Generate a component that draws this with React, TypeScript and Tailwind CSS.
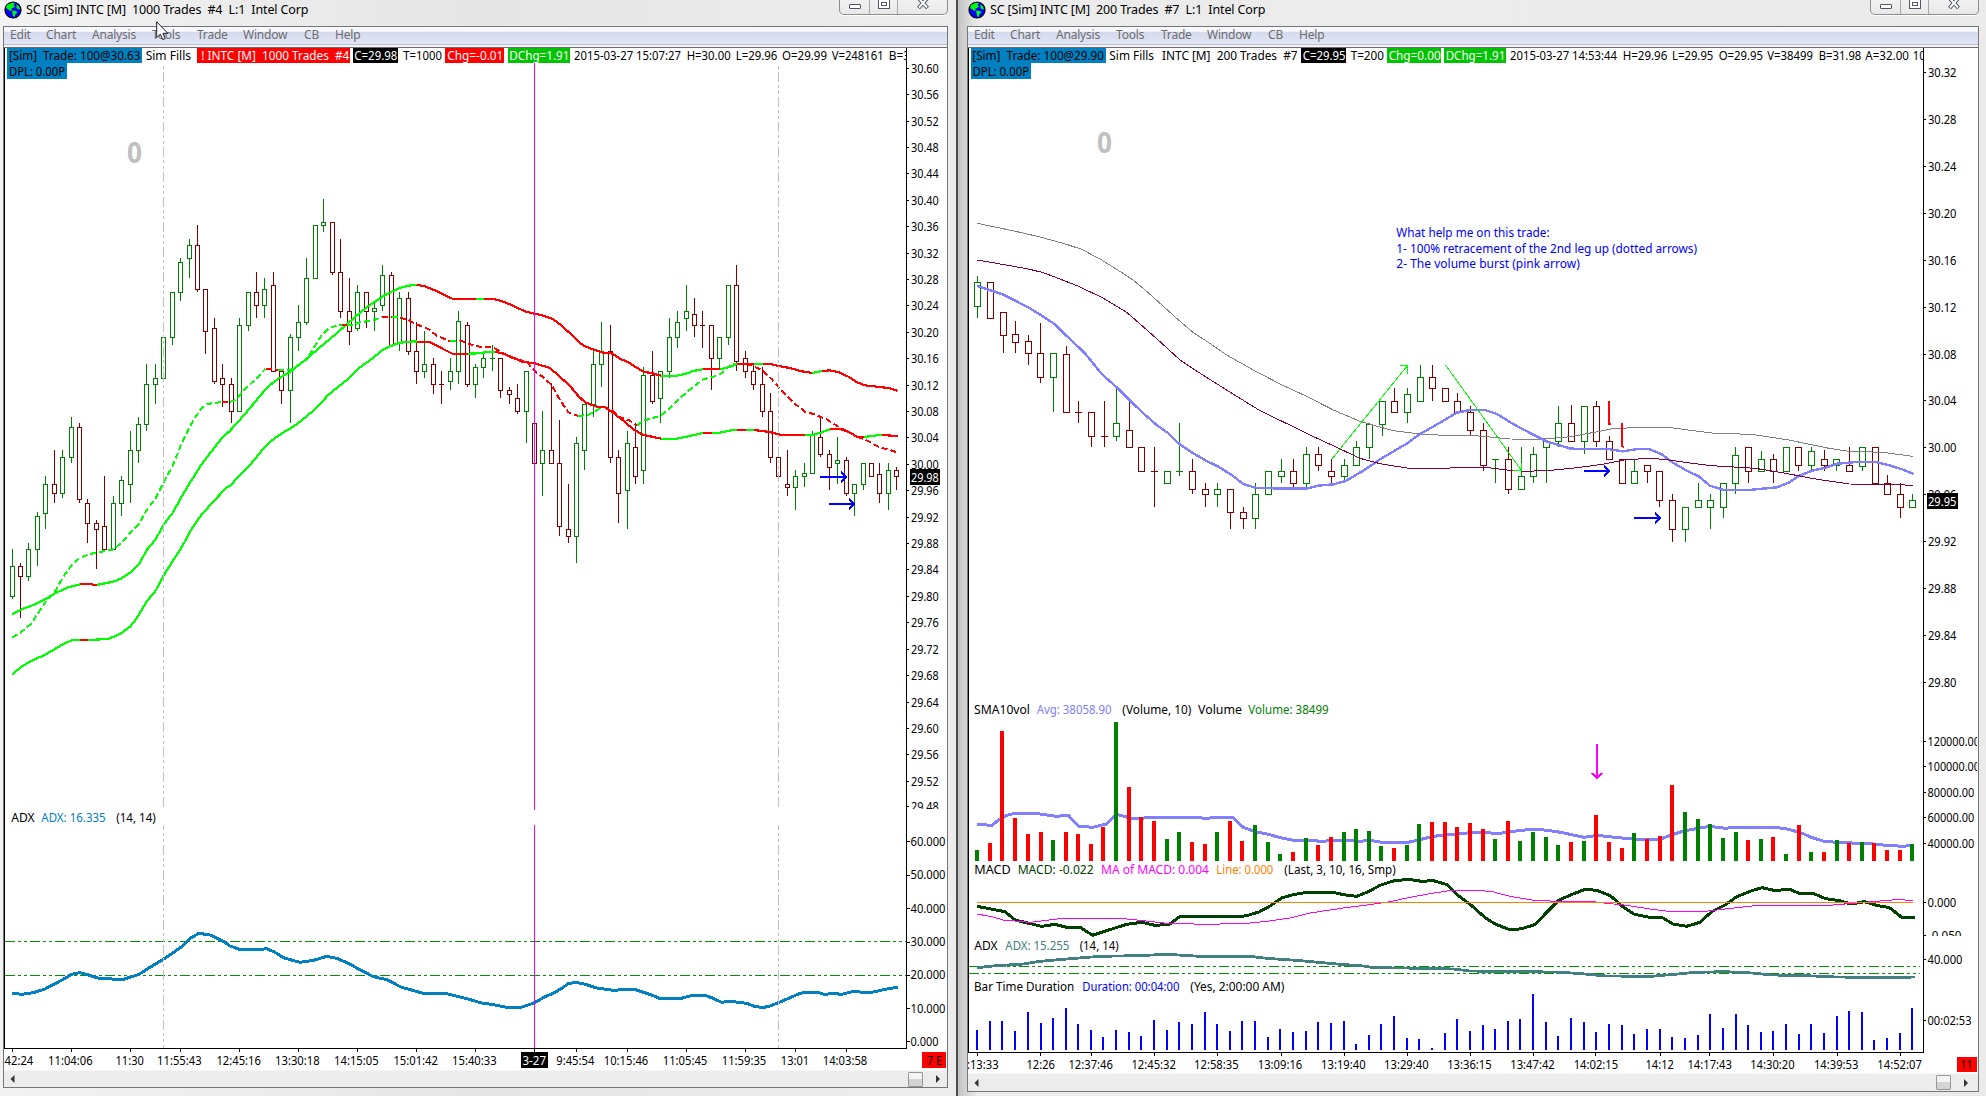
import React from 'react';

const FONT = 'font-["Noto_Sans","Open_Sans",sans-serif]';

/* ---------- chart data: coordinates are thirds of a pixel ---------- */

// x, high, body top, body bottom, low, colour
const LEFT_CANDLES = `
37 1107 1159 1249 1257 g;61 1149 1159 1189 1316 r;86 1089 1108 1189 1205 g;112 998 1009 1108 1158 g;136 888 913 1000 1047 g;
163 810 913 940 969 r;187 810 832 940 954 g;214 711 742 832 849 g;238 729 742 958 969 r;263 957 970 1030 1089 r;
289 1020 1030 1048 1167 r;313 888 1039 1108 1110 r;340 948 970 1108 1110 g;364 888 901 970 1008 g;391 753 811 913 969 g;
415 711 732 811 849 g;439 552 613 733 753 g;466 552 595 613 672 g;490 472 472 595 597 g;517 337 337 472 495 g;
541 234 247 337 363 g;567 177 196 235 294 g;592 135 196 328 336 r;617 328 328 454 522 r;643 414 445 604 612 r;
667 552 595 613 681 r;694 594 613 694 729 r;718 414 436 694 696 g;744 337 337 436 453 g;769 276 337 376 414 r;
793 294 328 376 414 g;820 276 316 574 576 r;844 573 573 631 672 r;871 462 472 631 729 g;895 375 427 472 513 g;
920 234 295 427 435 g;946 136 136 295 297 g;970 57 127 136 156 g;997 127 127 277 285 r;1021 177 277 394 414 r;
1047 294 394 454 495 r;1072 315 337 445 453 g;1098 337 337 394 444 r;1123 366 385 394 453 g;1147 255 286 376 393 g;
1174 276 286 496 498 r;1198 336 355 487 513 g;1224 336 355 514 525 r;1249 426 514 574 612 r;1273 453 553 574 594 g;
1300 534 553 613 642 r;1324 573 613 613 672 r;1351 534 574 604 630 g;1375 393 424 574 612 g;1402 426 436 613 621 r;
1426 552 562 613 654 g;1451 513 535 562 594 g;1477 495 535 535 573 g;1501 535 535 631 654 r;1528 621 631 643 672 r;
1552 612 655 694 702 r;1578 573 573 694 789 g;1603 730 730 850 852 r;1627 693 811 850 948 g;1654 612 811 850 852 r;
1678 720 850 1039 1068 r;1704 912 1048 1070 1089 r;1729 771 790 1070 1149 g;1754 673 673 811 870 g;1780 513 553 673 711 g;
1804 426 514 553 621 g;1831 435 514 832 849 r;1855 810 832 940 1029 r;1882 753 790 931 1047 g;1906 729 802 889 912 r;
1931 561 586 871 912 g;1957 513 586 664 672 r;1981 573 574 655 729 g;2008 414 472 574 594 g;2032 393 427 472 504 g;
2059 315 394 415 453 g;2083 354 403 436 471 r;2108 393 436 436 504 r;2134 436 436 535 630 r;2158 472 472 535 571 g;
2186 316 316 472 495 g;2209 255 316 544 573 r;2235 513 535 574 594 r;2260 555 574 613 630 r;2286 561 613 694 711 r;
2311 639 694 832 849 r;2335 832 832 889 891 r;2362 810 913 922 948 r;2386 870 889 922 990 g;2412 849 880 889 921 g;
2437 753 766 880 882 g;2461 711 772 823 831 r;2488 810 823 862 930 r;2512 771 841 850 912 g;2539 831 841 940 948 r;
2563 913 913 940 1008 g;2589 850 850 913 930 g;2614 850 850 889 891 r;2638 849 883 940 969 r;2665 849 871 940 990 g;
2689 861 871 889 930 r`;

const RIGHT_CANDLES = `
52 228 247 319 354 g;91 247 247 355 357 r;129 337 337 406 459 r;166 363 403 427 459 r;205 405 424 460 495 r;
242 369 460 532 549 r;280 460 460 532 636 g;319 438 463 637 639 r;356 603 637 637 669 r;394 637 637 709 741 r;
432 603 709 709 741 r;469 567 670 709 723 g;508 603 691 742 744 r;545 742 742 814 816 r;583 741 814 814 921 r;
622 814 814 850 852 g;658 669 814 814 828 g;697 777 814 868 882 r;736 849 868 883 921 r;772 849 868 883 921 g;
811 868 868 937 987 r;849 921 937 955 987 r;886 849 883 955 987 g;925 814 814 883 885 g;963 777 814 829 849 g;
1000 777 814 850 864 r;1039 741 763 850 867 g;1075 741 763 796 813 r;1114 777 814 829 849 r;1153 777 796 829 844 g;
1189 723 742 796 798 g;1228 669 673 742 777 g;1267 603 604 673 708 g;1303 564 604 637 639 r;1342 564 583 637 669 g;
1380 495 532 604 606 g;1417 495 532 565 603 r;1456 565 565 604 606 r;1493 579 604 637 639 r;1531 618 637 691 705 r;
1569 669 691 796 813 r;1607 778 778 778 849 g;1644 741 778 868 882 r;1682 741 829 868 870 g;1719 741 763 829 849 g;
1757 720 724 742 849 g;1795 618 670 724 741 g;1833 615 670 724 726 r;1871 619 619 724 762 g;1907 603 619 724 741 r;
1945 708 724 778 780 r;1984 778 778 850 852 r;2021 777 814 850 852 g;2058 796 796 814 849 r;2096 814 814 901 921 r;
2133 882 901 988 1026 r;2172 922 922 988 1026 g;2210 849 901 922 924 g;2246 882 901 922 987 g;2285 850 850 922 954 g;
2322 741 766 850 882 g;2360 742 742 814 849 r;2398 753 778 814 816 g;2435 762 778 814 849 r;2473 742 742 814 816 g;
2510 742 742 796 813 r;2547 742 754 796 813 g;2586 750 778 796 813 r;2623 778 778 796 813 g;2661 741 796 814 816 r;
2699 741 742 799 813 g;2737 742 742 850 852 r;2774 825 850 883 885 r;2813 849 883 922 954 r;2849 882 901 922 924 g`;

// x, volume top, colour, duration top
const BARS = `
51 480 g 1020;90 459 r 993;127 123 r 993;165 384 r 1023;204 432 r 966;242 426 r 999;279 450 g 984;318 426 r 954;354 432 r 1002;
393 462 r 1020;430 411 r 1041;468 96 g 1020;507 291 r 1026;544 381 r 1038;582 393 r 990;621 447 g 1020;658 426 g 996;
696 456 r 1002;735 462 r 966;771 426 g 1002;810 393 r 1023;847 453 r 993;885 405 g 993;924 456 g 1041;961 492 g 1017;
999 486 r 1026;1038 444 g 1023;1075 465 r 996;1113 441 r 999;1152 426 g 993;1188 417 g 1062;1227 423 g 1035;1264 468 g 1002;
1302 474 r 978;1341 465 g 1044;1378 402 g 1047;1416 396 r 1074;1455 396 r 1029;1492 411 r 987;1530 399 r 1023;1569 417 r 1005;
1604 447 g 1017;1643 393 r 993;1680 453 g 987;1718 426 g 912;1756 441 g 996;1793 465 g 1038;1831 456 r 984;1870 453 g 996;
1906 375 r 1026;1944 456 r 1002;1983 474 r 1005;2019 429 g 1032;2057 447 r 1017;2096 438 r 1017;2132 285 r 1041;
2171 366 g 1044;2208 387 g 1035;2245 402 g 972;2284 444 g 1014;2321 426 g 972;2358 450 r 1005;2397 447 g 1026;
2433 441 r 1023;2472 492 g 1002;2511 405 r 1032;2546 486 g 1002;2585 486 r 1029;2622 450 g 978;2660 459 r 963;
2698 456 g 966;2735 459 r 1050;2773 480 r 1044;2812 480 r 1029;2847 462 g 954`;

const UPPER =
  'g 37,1303 65,1288 100,1275 135,1258 165,1240 205,1222 240,1213 r 265,1212 290,1215 g 340,1205 365,1195 390,1178 418,1152 440,1110 467,1078 490,1035 517,1000 545,950 575,900 600,860 630,820 665,775 690,752 715,725 745,690 770,660 795,630 820,607 845,590 870,577 895,555 920,538 950,510 980,485 1010,460 1040,433 1070,407 1100,382 1125,365 1150,348 1175,335 1200,324 1225,317 1250,314 r 1275,319 1300,329 1330,343 1357,356 1427,356 g 1452,356 r 1480,357 1502,362 1530,373 1555,385 1580,396 1604,401 1630,407 1660,418 1685,437 1710,460 1735,485 1755,499 1790,512 1810,518 1835,520 1860,536 1885,547 1910,563 1930,575 1957,580 1984,587 g 2030,587 2055,582 2080,573 2108,568 r 2160,568 g 2185,562 2212,552 r 2262,551 g 2290,551 r 2310,551 2335,558 2370,564 2400,573 2437,579 g 2465,573 r 2490,571 2515,576 2545,590 2570,606 2595,616 2640,621 2670,625 2693,633';
const LOWER =
  'g 37,1483 65,1460 90,1445 135,1424 165,1407 190,1392 215,1381 240,1380 r 265,1380 g 325,1377 360,1362 390,1340 410,1315 440,1265 467,1232 490,1188 517,1145 545,1102 570,1055 600,1010 635,970 680,922 690,918 715,890 750,855 795,800 820,778 845,760 880,740 915,713 945,688 985,645 1015,620 1050,592 1080,562 1120,533 1150,508 1175,497 1200,488 1240,484 1252,485 r 1285,485 1310,497 1335,510 1357,521 1405,521 g 1435,520 1455,517 1485,515 r 1510,521 1540,533 1565,545 1604,550 1650,564 1685,595 1710,618 1735,648 1755,667 1790,680 1815,682 1835,695 1870,722 1900,748 1930,765 1960,771 1984,776 g 2030,776 2060,770 2108,759 r 2135,759 g 2160,758 2200,750 2210,750 r 2237,750 g 2262,750 r 2310,756 2340,764 2415,766 g 2440,765 2465,757 2490,748 r 2515,746 2545,755 2570,770 2593,771 g 2630,766 2645,765 r 2693,768';
const MIDDLE =
  'g 37,1373 65,1355 95,1330 115,1298 135,1268 165,1235 190,1190 215,1155 240,1133 270,1122 340,1108 365,1088 390,1060 418,1030 440,990 467,955 490,908 517,860 545,790 575,730 600,690 620,672 667,666 r 690,666 g 710,658 725,638 745,618 770,595 797,566 r 835,569 g 870,570 895,558 925,530 945,497 965,465 985,445 1010,437 1025,434 r 1040,434 g 1060,434 1080,427 1120,421 1147,411 r 1175,411 g 1200,413 r 1225,420 1250,433 1285,447 1310,467 1350,484 g 1378,480 r 1410,493 1440,500 1480,503 1510,520 1540,535 1580,545 1604,573 1630,592 1655,615 1680,660 1705,697 1735,708 g 1765,705 1810,680 r 1835,690 1860,712 1890,722 1910,737 g 1930,722 1980,708 2010,685 2045,650 2080,620 2110,598 2140,590 2165,580 2195,552 2212,552 r 2250,554 2285,570 2315,597 2345,632 2380,668 2415,695 2440,702 2480,718 2515,740 2545,755 2570,770 2600,781 2640,803 2665,808 2693,818';
const LEFT_ADX =
  '37,640 65,643 100,638 135,627 165,611 190,598 215,583 240,578 265,585 300,596 370,598 415,584 450,562 490,538 517,520 545,500 570,475 597,460 630,465 665,481 690,498 718,508 785,508 800,506 825,517 850,533 900,547 940,541 980,529 1010,535 1045,550 1085,572 1120,590 1160,599 1205,622 1270,640 1340,641 1400,656 1445,669 1480,674 1515,681 1560,683 1604,668 1635,650 1660,640 1685,625 1705,611 1729,607 1760,614 1790,624 1840,631 1880,628 1910,630 1955,645 1980,656 2040,656 2070,648 2115,646 2140,655 2165,667 2190,664 2240,670 2260,678 2287,683 2310,678 2340,666 2370,653 2400,640 2425,636 2450,636 2475,644 2495,640 2525,643 2565,633 2590,638 2620,636 2665,626 2695,622';

const GRAY_MA =
  '52,70 110,82 185,98 240,111 310,130 365,148 425,180 470,208 515,237 550,265 600,310 650,355 700,398 745,427 800,465 880,510 960,552 1042,590 1120,630 1200,664 1230,673 1300,692 1380,702 1450,706 1530,706 1580,710 1650,717 1740,718 1830,710 1900,697 1950,687 2030,682 2120,682 2180,690 2260,700 2370,703 2480,720 2600,745 2660,754 2760,757 2849,769';
const MAROON_MA =
  '52,180 110,190 205,207 250,218 300,237 358,260 425,292 500,337 545,376 600,425 660,480 705,510 760,545 835,592 900,632 983,672 1050,705 1130,742 1200,775 1260,791 1340,804 1470,804 1500,802 1575,802 1640,810 1700,814 1780,810 1850,803 1930,792 1990,780 2060,775 2110,778 2170,787 2250,797 2380,805 2460,818 2560,837 2660,852 2780,853 2849,856';
const BLUE_MA =
  '52,258 130,284 205,322 242,345 285,373 320,408 375,460 425,522 470,562 508,600 550,640 590,675 625,700 658,732 700,760 740,783 775,800 815,825 850,852 886,863 970,866 1040,866 1075,857 1120,853 1155,844 1210,812 1260,778 1340,731 1380,702 1440,668 1490,638 1530,630 1575,630 1610,642 1660,673 1720,705 1760,725 1830,746 1940,747 1985,754 2030,747 2065,748 2100,762 2130,785 2175,812 2210,828 2245,857 2285,870 2360,870 2445,862 2480,848 2510,828 2550,812 2590,803 2625,791 2680,786 2740,786 2780,796 2820,809 2852,822';
const VOLUME_AVG =
  '51,403 97,406 115,390 140,376 165,370 225,370 290,379 325,376 355,408 397,412 440,402 470,373 510,384 540,385 575,382 700,382 740,385 775,382 818,382 850,412 885,425 930,434 965,444 1000,451 1060,451 1085,455 1110,451 1165,451 1200,454 1230,451 1265,457 1345,457 1400,444 1440,436 1500,431 1540,427 1585,427 1605,432 1650,425 1720,417 1760,421 1800,427 1870,442 1910,436 1960,442 2030,448 2095,448 2130,435 2170,422 2245,409 2290,415 2320,412 2440,412 2480,418 2520,430 2550,443 2585,454 2640,458 2720,461 2770,466 2820,469 2852,466';
const MACD =
  '51,649 135,665 165,690 245,709 285,703 320,712 362,713 398,736 440,722 500,703 545,697 585,706 628,703 658,681 700,678 790,678 825,681 860,677 897,666 930,648 965,624 1000,614 1040,607 1120,607 1150,614 1190,619 1225,605 1260,586 1300,573 1345,568 1385,574 1420,572 1462,584 1490,613 1530,643 1575,683 1605,702 1650,720 1685,716 1725,703 1760,665 1795,630 1835,613 1875,597 1910,602 1948,617 1985,650 2020,673 2060,681 2105,684 2135,702 2175,709 2215,697 2250,665 2290,645 2325,620 2370,602 2400,593 2440,602 2480,597 2515,612 2550,609 2590,626 2630,632 2665,642 2705,635 2745,647 2780,653 2815,681 2855,681';
const MACD_MA =
  '51,672 95,680 130,690 210,697 300,686 490,686 550,692 620,700 740,703 860,700 920,694 990,684 1050,669 1150,654 1230,644 1290,635 1350,622 1410,611 1480,600 1550,600 1600,606 1650,619 1720,631 1790,634 1890,634 1935,640 1990,645 2060,656 2120,664 2230,664 2300,656 2380,647 2600,646 2660,641 2740,634 2800,629 2849,631';
const RIGHT_ADX =
  '51,833 110,827 190,822 240,814 320,807 420,799 530,797 622,793 720,799 870,799 920,805 1010,811 1130,822 1210,828 1240,833 1400,835 1480,837 1530,843 1660,845 1780,846 1850,850 1935,858 2070,859 2150,852 2200,847 2290,845 2370,849 2430,855 2530,857 2620,861 2780,863 2855,861';

/* ---------- drawing helpers ---------- */

type Origin = { ox: number; oy: number; stretch?: boolean };

const barX = (x: number) => (x <= 1500 ? x : 1500 + (x - 1500) * 1.0067);

const scalePoints = (s: string, { ox, oy, stretch }: Origin) =>
  s
    .trim()
    .split(/\s+/)
    .map((p) => {
      const [x, y] = p.split(',').map(Number);
      return `${(ox + (stretch ? barX(x) : x) / 3).toFixed(2)},${(oy + y / 3).toFixed(2)}`;
    })
    .join(' ');

function Curve({ data, color, width, ...o }: { data: string; color: string; width: number } & Origin) {
  return (
    <polyline points={scalePoints(data, o)} fill="none" stroke={color} strokeWidth={width} strokeLinejoin="round" shapeRendering="crispEdges" />
  );
}

function TrendCurve({ data, dash, width, ...o }: { data: string; dash?: string; width: number } & Origin) {
  const runs: { c: string; p: string[] }[] = [];
  for (const token of data.split(' ')) {
    if (token === 'g' || token === 'r') {
      const last = runs[runs.length - 1];
      runs.push({ c: token, p: last ? [last.p[last.p.length - 1]] : [] });
    } else {
      runs[runs.length - 1].p.push(token);
    }
  }
  return (
    <g fill="none" strokeWidth={width} strokeDasharray={dash} shapeRendering="crispEdges">
      {runs.map((r, i) => (
        <polyline key={i} points={scalePoints(r.p.join(' '), o)} stroke={r.c === 'g' ? '#00ff00' : '#ff0000'} />
      ))}
    </g>
  );
}

function Candles({ data, half, ox, oy, stretch }: { data: string; half: number } & Origin) {
  return (
    <g shapeRendering="crispEdges">
      {data
        .trim()
        .split(';')
        .map((row, i) => {
          const f = row.trim().split(' ');
          const [h, t, b, l] = f.slice(1, 5).map((v) => Math.floor(Number(v) / 3));
          const color = f[5] === 'g' ? '#008000' : '#800000';
          const cx = ox + Math.floor((stretch ? barX(Number(f[0])) : Number(f[0])) / 3);
          return (
            <g key={i} fill={color}>
              {t > h && <rect x={cx} y={oy + h} width={1} height={t - h} />}
              {l > b + 1 && <rect x={cx} y={oy + b + 1} width={1} height={l - b - 1} />}
              {t === b ? (
                <rect x={cx - half} y={oy + t} width={half * 2 + 1} height={1} />
              ) : (
                <rect x={cx - half + 0.5} y={oy + t + 0.5} width={half * 2} height={b - t} fill="none" stroke={color} />
              )}
            </g>
          );
        })}
    </g>
  );
}

// Text stretched to run from x1 to x2.
function T({ x1, x2, y, c = '#000', size = 12, bold, children }: { x1: number; x2: number; y: number; c?: string; size?: number; bold?: boolean; children: string }) {
  return (
    <text x={x1} y={y} fill={c} fontSize={size} fontWeight={bold ? 700 : 400} textLength={x2 - x1} lengthAdjust="spacingAndGlyphs" style={{ whiteSpace: 'pre' }}>
      {children}
    </text>
  );
}

type Chip = { bg?: [number, number, string]; x: [number, number]; c?: string; t: string };

function Header({ chips, ox }: { chips: Chip[]; ox: number }) {
  return (
    <g>
      {chips.map((k, i) => (
        <g key={i}>
          {k.bg && <rect x={ox + k.bg[0] / 3} y={48} width={(k.bg[1] - k.bg[0]) / 3} height={15} fill={k.bg[2]} shapeRendering="crispEdges" />}
          <T x1={ox + k.x[0] / 3} x2={ox + k.x[1] / 3} y={60} c={k.c}>
            {k.t}
          </T>
        </g>
      ))}
    </g>
  );
}

function BlueArrow({ x1, x2, y }: { x1: number; x2: number; y: number }) {
  return (
    <path d={`M${x1} ${y}H${x2}M${x2 - 5} ${y - 5.5}L${x2} ${y}L${x2 - 5} ${y + 5.5}`} fill="none" stroke="#0000ff" strokeWidth={2} shapeRendering="crispEdges" />
  );
}

function TimeAxis({ labels, ticks, ox, axisY, baseline, stretch }: { labels: [number, string][]; ticks: number[]; ox: number; axisY: number; baseline: number; stretch?: boolean }) {
  const at = (x: number) => (stretch ? barX(x) : x) / 3;
  return (
    <g>
      {ticks.map((t) => (
        <rect key={t} x={ox + Math.floor(at(t))} y={axisY} width={1} height={4} shapeRendering="crispEdges" />
      ))}
      {labels.map(([cx, t]) => {
        const w = t.length === 8 ? 44.5 : t.length === 7 ? 38 : 28.3;
        const mid = ox + at(cx);
        return (
          <T key={t} x1={mid - w / 2} x2={mid + w / 2} y={baseline}>
            {t}
          </T>
        );
      })}
    </g>
  );
}

/* ---------- charts ---------- */

const LEFT_HEADER: Chip[] = [
  { bg: [21, 426, '#0080c0'], x: [27, 421], t: '[Sim]  Trade: 100@30.63' },
  { x: [437, 573], t: 'Sim Fills' },
  { bg: [591, 1050, '#ff0000'], x: [604, 1048], c: '#fff', t: '! INTC [M]  1000 Trades  #4' },
  { bg: [1059, 1194, '#000'], x: [1063, 1192], c: '#fff', t: 'C=29.98' },
  { x: [1210, 1326], t: 'T=1000' },
  { bg: [1335, 1512, '#ff0000'], x: [1342, 1510], c: '#fff', t: 'Chg=-0.01' },
  { bg: [1524, 1710, '#00c400'], x: [1528, 1708], c: '#fff', t: 'DChg=1.91' },
  { x: [1722, 2043], t: '2015-03-27 15:07:27' },
  { x: [2060, 2192], t: 'H=30.00' },
  { x: [2207, 2332], t: 'L=29.96' },
  { x: [2346, 2481], t: 'O=29.99' },
  { x: [2495, 2651], t: 'V=248161' },
  { x: [2666, 2730], t: 'B=3' },
];

const RIGHT_HEADER: Chip[] = [
  { bg: [33, 438, '#0080c0'], x: [37, 432], t: '[Sim]  Trade: 100@29.90' },
  { x: [448, 582], t: 'Sim Fills' },
  { x: [606, 1013], t: 'INTC [M]  200 Trades  #7' },
  { bg: [1023, 1158, '#000'], x: [1028, 1157], c: '#fff', t: 'C=29.95' },
  { x: [1172, 1272], t: 'T=200' },
  { bg: [1281, 1443, '#00c400'], x: [1286, 1442], c: '#fff', t: 'Chg=0.00' },
  { bg: [1452, 1638, '#00c400'], x: [1457, 1636], c: '#fff', t: 'DChg=1.91' },
  { x: [1650, 1971], t: '2015-03-27 14:53:44' },
  { x: [1988, 2122], t: 'H=29.96' },
  { x: [2136, 2260], t: 'L=29.95' },
  { x: [2276, 2409], t: 'O=29.95' },
  { x: [2422, 2559], t: 'V=38499' },
  { x: [2576, 2704], t: 'B=31.98' },
  { x: [2716, 2847], t: 'A=32.00' },
  { x: [2858, 2897], t: '10' },
];

function LeftChart() {
  const prices = Array.from({ length: 29 }, (_, i) => ({ t: (30.6 - i * 0.04).toFixed(2), y: i === 28 ? 806 : 67.7 + i * 26.41 }));
  const o = { ox: 0, oy: 180 };
  return (
    <svg className={`block shrink-0 ${FONT}`} width={943} height={1022} viewBox="4 48 943 1022">
      <defs>
        <clipPath id="l-plot"><rect x={4} y={48} width={902} height={1000} /></clipPath>
        <clipPath id="l-price"><rect x={900} y={48} width={60} height={761} /></clipPath>
      </defs>
      <rect x={4} y={48} width={943} height={1022} fill="#fff" />
      <g clipPath="url(#l-plot)">
        <T x1={127} x2={142} y={163} c="#c0c0c0" size={28} bold>0</T>
        <Candles data={LEFT_CANDLES} half={2} {...o} />
        <TrendCurve data={UPPER} width={2.2} {...o} />
        <TrendCurve data={LOWER} width={2.2} {...o} />
        <TrendCurve data={MIDDLE} width={2} dash="6 3" {...o} />
        <g stroke="#009000" strokeDasharray="10 3 3 3 3 3" shapeRendering="crispEdges">
          <path d="M5 941.5H906M5 975.5H906" />
        </g>
        <Curve data={LEFT_ADX} color="#0080c0" width={3} ox={0} oy={780} />
        <g stroke="#c0c0c0" fill="none" shapeRendering="crispEdges">
          <path d="M163.5 66V810M778.5 66V810" strokeDasharray="10 3 3 3 3 3" strokeDashoffset={19} />
          <path d="M163.5 825V1048M778.5 825V1048" strokeDasharray="10 3 3 3 3 3" strokeDashoffset={5} />
        </g>
        <rect x={534} y={63} width={1} height={747} fill="#ff00ff" />
        <rect x={534} y={825} width={1} height={223} fill="#ff00ff" />
        <BlueArrow x1={820} x2={846} y={477} />
        <BlueArrow x1={829} x2={854} y={504} />
        <Header chips={LEFT_HEADER} ox={0} />
        <rect x={7} y={63} width={60} height={16} fill="#0080c0" />
        <T x1={9} x2={65} y={76}>DPL: 0.00P</T>
        <T x1={11.3} x2={34.7} y={822}>ADX</T>
        <T x1={41.3} x2={105.7} y={822} c="#0080c0">ADX: 16.335</T>
        <T x1={116.3} x2={155.7} y={822}>(14, 14)</T>
      </g>
      <g shapeRendering="crispEdges">
        <rect x={4} y={48} width={1} height={1001} />
        <rect x={906} y={48} width={1} height={1001} />
        <rect x={4} y={1048} width={903} height={1} />
        {prices.map((p) => <rect key={p.t} x={907} y={Math.round(p.y)} width={2} height={1} />)}
        {[841, 875, 908, 942, 975, 1008, 1041].map((y) => <rect key={y} x={907} y={y} width={3} height={1} />)}
      </g>
      <g clipPath="url(#l-price)">
        {prices.map((p) => <T key={p.t} x1={911} x2={938.8} y={p.y + 5}>{p.t}</T>)}
      </g>
      {[60, 50, 40, 30, 20, 10, 0].map((v, i) => (
        <T key={v} x1={910.5} x2={v ? 945.5 : 938.5} y={846 + i * 33.35}>{v.toFixed(3)}</T>
      ))}
      <rect x={910} y={469} width={30} height={16} />
      <T x1={911} x2={938.8} y={482} c="#fff">29.98</T>
      <rect x={521} y={1052} width={27} height={16} />
      <T x1={522.5} x2={546} y={1065} c="#fff">3-27</T>
      <TimeAxis
        ox={0}
        axisY={1048}
        baseline={1065}
        ticks={[37, 214, 391, 541, 718, 895, 1072, 1249, 1426, 1603, 1729, 1882, 2059, 2236, 2386, 2539]}
        labels={[[33, '10:42:24'], [211, '11:04:06'], [389, '11:30'], [538, '11:55:43'], [716, '12:45:16'], [892, '13:30:18'], [1069, '14:15:05'], [1247, '15:01:42'], [1423, '15:40:33'], [1726, '9:45:54'], [1878, '10:15:46'], [2055, '11:05:45'], [2232, '11:59:35'], [2385, '13:01'], [2535, '14:03:58']]}
      />
      <rect x={922} y={1052} width={24} height={16} fill="#ff0000" />
      <T x1={927} x2={942} y={1065}>7 E</T>
    </svg>
  );
}

function RightChart() {
  const prices = Array.from({ length: 14 }, (_, i) => ({ t: (30.32 - i * 0.04).toFixed(2), y: 71.7 + i * 46.97 }));
  const o = { ox: 960, oy: 200, stretch: true };
  const s = { ox: 960, oy: 690, stretch: true };
  const bars = BARS.trim().split(';').map((r) => r.trim().split(' '));
  const seg = (items: [number, number, string, string?][], y: number) =>
    items.map(([a, b, t, c]) => <T key={t} x1={960 + a / 3} x2={960 + b / 3} y={y} c={c}>{t}</T>);
  return (
    <svg className={`block shrink-0 ${FONT}`} width={1010} height={1025} viewBox="968 48 1010 1025">
      <defs>
        <clipPath id="r-plot"><rect x={968} y={48} width={955} height={1004} /></clipPath>
        <clipPath id="r-scale"><rect x={1923} y={48} width={54} height={1004} /></clipPath>
        <clipPath id="r-macd"><rect x={1923} y={860} width={54} height={76} /></clipPath>
      </defs>
      <rect x={968} y={48} width={1010} height={1025} fill="#fff" />
      <g clipPath="url(#r-plot)">
        <T x1={1097} x2={1112} y={153} c="#c0c0c0" size={28} bold>0</T>
        <Candles data={RIGHT_CANDLES} half={3} {...o} />
        <Curve data={GRAY_MA} color="#808080" width={1} {...o} />
        <Curve data={BLUE_MA} color="#8080ff" width={2.4} {...o} />
        <Curve data={MAROON_MA} color="#800040" width={1} {...o} />
        <g fill="none" stroke="#00ff00" shapeRendering="crispEdges">
          <path d="M1331.5 459.5L1407.5 365.5M1400 365.5H1407.5V374" />
          <path d="M1445.5 365L1521.5 470.5M1521.5 463V470.5H1513" />
        </g>
        <g fill="#ff0000">
          <rect x={1608} y={401} width={2} height={24} /><rect x={1610} y={423} width={1} height={2} />
          <rect x={1621} y={423} width={2} height={24} /><rect x={1623} y={446} width={1} height={2} />
        </g>
        <BlueArrow x1={1584} x2={1609} y={471} />
        <BlueArrow x1={1634} x2={1660} y={518} />
        <Header chips={RIGHT_HEADER} ox={960} />
        <rect x={971} y={63} width={60} height={16} fill="#0080c0" />
        <T x1={972.5} x2={1029} y={76}>DPL: 0.00P</T>
        <T x1={1396.3} x2={1549.6} y={237} c="#0000ff">What help me on this trade:</T>
        <T x1={1396.3} x2={1697} y={252.500} c="#0000ff">1- 100% retracement of the 2nd leg up (dotted arrows)</T>
        <T x1={1396.3} x2={1579.8} y={268} c="#0000ff">2- The volume burst (pink arrow)</T>

        <Curve data={VOLUME_AVG} color="#8080ff" width={3} {...s} />
        <g shapeRendering="crispEdges">
          {bars.map(([x, v, c, d]) => {
            const cx = 960 + Math.round(barX(Number(x)) / 3);
            return (
              <g key={x}>
                <rect x={cx - 2} y={690 + Number(v) / 3} width={4} height={171 - Number(v) / 3} fill={c === 'g' ? '#008000' : '#ff0000'} />
                <rect x={cx - 1} y={690 + Number(d) / 3} width={2} height={360 - Number(d) / 3} fill="#0000ff" />
              </g>
            );
          })}
          <path d="M1597 744V777M1591.500 773L1597 778L1602.500 773" fill="none" stroke="#ff00ff" strokeWidth={2} />
        </g>
        <Curve data={MACD} color="#004000" width={3} {...s} />
        <Curve data={MACD_MA} color="#ff00ff" width={1} {...s} />
        <rect x={977} y={902} width={936} height={1} fill="#ff8000" />
        <path d="M969 966.5H1920M969 973.5H1920" stroke="#009000" strokeDasharray="10 3 3 3 3 3" shapeRendering="crispEdges" />
        <Curve data={RIGHT_ADX} color="#408080" width={2.8} {...s} />
        {seg([[42, 210, 'SMA10vol'], [230, 455, 'Avg: 38058.90', '#8080ff'], [487, 694, '(Volume, 10)'], [714, 846, 'Volume'], [865, 1106, 'Volume: 38499', '#008000']], 714)}
        {seg([[43, 152, 'MACD'], [173, 401, 'MACD: -0.022', '#004000'], [423, 747, 'MA of MACD: 0.004', '#ff00ff'], [769, 940, 'Line: 0.000', '#ff8000'], [973, 1307, '(Last, 3, 10, 16, Smp)']], 874)}
        {seg([[43, 113, 'ADX'], [136, 328, 'ADX: 15.255', '#408080'], [359, 476, '(14, 14)']], 950)}
        {seg([[42, 343, 'Bar Time Duration'], [367, 658, 'Duration: 00:04:00', '#0000ff'], [691, 973, '(Yes, 2:00:00 AM)']], 991)}
      </g>
      <g shapeRendering="crispEdges">
        <rect x={968} y={48} width={1} height={1005} />
        <rect x={1923} y={48} width={1} height={1005} />
        <rect x={968} y={1052} width={956} height={1} />
        {[...prices.map((p) => Math.round(p.y)), 741, 766, 792, 817, 843, 902, 935, 959, 1020].map((y) => (
          <rect key={y} x={1924} y={y} width={2} height={1} />
        ))}
      </g>
      <g clipPath="url(#r-scale)">
        {prices.map((p) => <T key={p.t} x1={1928} x2={1956.5} y={p.y + 5}>{p.t}</T>)}
        <T x1={1927.5} x2={1980} y={746}>120000.00</T>
        <T x1={1927.5} x2={1980} y={771}>100000.00</T>
        <T x1={1927.5} x2={1974.3} y={797}>80000.00</T>
        <T x1={1927.5} x2={1974.3} y={822}>60000.00</T>
        <T x1={1927.5} x2={1974.3} y={848}>40000.00</T>
        <T x1={1927.5} x2={1956.3} y={907}>0.000</T>
        <T x1={1927.5} x2={1962.5} y={964}>40.000</T>
        <T x1={1927.5} x2={1971.5} y={1025}>00:02:53</T>
      </g>
      <g clipPath="url(#r-macd)"><T x1={1928} x2={1961.5} y={940}>-0.050</T></g>
      <rect x={1927} y={493} width={31} height={16} />
      <T x1={1928} x2={1956.5} y={505.5} c="#fff">29.95</T>
      <TimeAxis
        stretch
        ox={960}
        axisY={1052}
        baseline={1069}
        ticks={[52, 241, 394, 583, 772, 964, 1153, 1342, 1530, 1719, 1905, 2097, 2245, 2434, 2625, 2813]}
        labels={[[49, '12:13:33'], [242, '12:26'], [392, '12:37:46'], [581, '12:45:32'], [769, '12:58:35'], [960, '13:09:16'], [1150, '13:19:40'], [1339, '13:29:40'], [1528, '13:36:15'], [1716, '13:47:42'], [1905, '14:02:15'], [2095, '14:12'], [2244, '14:17:43'], [2431, '14:30:20'], [2621, '14:39:53'], [2810, '14:52:07']]}
      />
      <rect x={1957} y={1057} width={20} height={15} fill="#ff0000" />
      <T x1={1960.5} x2={1972.5} y={1069}>11</T>
    </svg>
  );
}

/* ---------- window chrome ---------- */

function Globe() {
  return (
    <svg width={18} height={18} viewBox="0 0 18 18" className="shrink-0">
      <circle cx={9} cy={9} r={8} fill="#0000ff" stroke="#000" strokeWidth={1.2} />
      <path d="M3 4L7 2H11L9.500 4L11 5.500L9 7L7 7.500L8 9L6.500 10L4.500 8.500L2 7ZM8 9.500L12 10L13.500 11.500L11.500 13L10.500 16L9 15L8.500 12ZM12.500 3L15 5.500L16 8L14 8.500L12.500 6.500Z" fill="#00ff00" />
    </svg>
  );
}

function WindowButtons() {
  return (
    <div className="flex h-[15px] w-[109px] rounded-b-[5px] border border-t-0 border-[#8e8e8e] bg-gradient-to-b from-[#f1f1f1] to-[#e8e8e8] shadow-[0_1px_0_#fff]">
      <div className="flex w-[30px] justify-center border-r border-[#a8a8a8] pt-1">
        <div className="h-[5px] w-3 rounded-[1px] border border-[#535666] bg-white" />
      </div>
      <div className="flex w-7 justify-center border-r border-[#a8a8a8]">
        <div className="flex h-[9px] w-3 items-center justify-center border border-t-0 border-[#535666] bg-white">
          <div className="h-1 w-1.5 border border-[#535666]" />
        </div>
      </div>
      <div className="flex flex-1 justify-center">
        <svg width={14} height={10} viewBox="0 0 14 10">
          <path d="M2.500 -2L11.500 8M11.500 -2L2.500 8" stroke="#535666" strokeWidth={4} />
          <path d="M3 -1.500L11 7.500M11 -1.500L3 7.500" stroke="#fff" strokeWidth={2} />
        </svg>
      </div>
    </div>
  );
}

const MENU: [string, string][] = [
  ['Edit', 'w-[21px]'],
  ['Chart', 'w-[31px]'],
  ['Analysis', 'w-[45px]'],
  ['Tools', 'w-[30px]'],
  ['Trade', 'w-[31px]'],
  ['Window', 'w-[46px]'],
  ['CB', 'w-[16px]'],
  ['Help', 'w-[26px]'],
];

function MenuBar() {
  return (
    <div className="flex h-[21px] shrink-0 flex-col bg-[#f0f3f9]">
      <div className="flex h-[18px] items-center gap-[15px] whitespace-nowrap border-b border-[#b4bdd3] bg-gradient-to-b from-[#f6f8fc] from-[25%] via-[#d5dbed] via-[32%] to-[#e1e6f5] pb-px pl-1.5 text-[12px] leading-4 tracking-[-0.2px] text-[#6d6d6d]">
        {MENU.map(([label, w]) => (
          <span key={label} className={w}>{label}</span>
        ))}
      </div>
      <div className="h-0.5 bg-[#f5f5f8]" />
      <div className="h-px bg-[#6b6b6b]" />
    </div>
  );
}

function ScrollBar({ trail }: { trail: string }) {
  return (
    <div className={`flex min-h-0 flex-1 items-center border-t border-[#f6f6f6] bg-[#ececec] ${trail}`}>
      <svg width={20} height={14} viewBox="0 0 20 14"><path d="M10.500 3V11L6.500 7Z" fill="#333" /></svg>
      <div className="flex-1" />
      <div className="h-[15px] w-[15px] rounded-[1px] border border-[#979797] bg-gradient-to-b from-[#f4f4f4] from-50% to-[#d4d4d4] to-50%" />
      <svg width={24} height={14} viewBox="0 0 24 14"><path d="M13 3V11L17 7Z" fill="#333" /></svg>
    </div>
  );
}

function ChartWindow({ title, frame, client, trail, buttons, children }: { title: string; frame: string; client: string; trail: string; buttons: string; children: React.ReactNode }) {
  return (
    <section className={`flex h-[1096px] shrink-0 flex-col overflow-hidden ${frame}`}>
      <header className={`flex h-[26px] shrink-0 items-start justify-between ${buttons}`}>
        <div className="flex items-center gap-1 pl-px pt-px">
          <Globe />
          <span className="whitespace-pre text-[12.5px] leading-[18px] tracking-[-0.15px] text-black">{title}</span>
        </div>
        <WindowButtons />
      </header>
      <div className={`flex shrink-0 flex-col border border-[#767676] ${client}`}>
        <MenuBar />
        {children}
        <ScrollBar trail={trail} />
      </div>
    </section>
  );
}

export default function App() {
  return (
    <div className={`relative flex h-[1096px] w-[1986px] overflow-hidden bg-[#e9e9e9] ${FONT}`}>
      <ChartWindow
        title="SC [Sim] INTC [M]  1000 Trades  #4  L:1  Intel Corp"
        frame="w-[958px] border-r-2 border-[#4c4c4c] bg-gradient-to-r from-[#f2f2f2] via-[#e6e6e6] to-[#ededed] pl-[3px]"
        client="h-[1062px] w-[945px]"
        trail="pr-0"
        buttons="w-[945px]"
      >
        <LeftChart />
      </ChartWindow>
      <ChartWindow
        title="SC [Sim] INTC [M]  200 Trades  #7  L:1  Intel Corp"
        frame="w-[1028px] bg-gradient-to-r from-[#c4c4c4] via-[#ececec] via-[2%] to-[#ebebeb] pl-[9px]"
        client="h-[1066px] w-[1012px]"
        trail="pr-[3px]"
        buttons="w-[1012px]"
      >
        <RightChart />
      </ChartWindow>
      <svg className="absolute left-[156px] top-[21px]" width={13} height={20} viewBox="0 0 13 20">
        <path d="M0.700 0.800V16.500L4.300 13.200L6.800 18.600L9.200 17.500L6.900 12.300H11.800Z" fill="#fff" stroke="#1a1a2a" strokeWidth={1} />
      </svg>
    </div>
  );
}
